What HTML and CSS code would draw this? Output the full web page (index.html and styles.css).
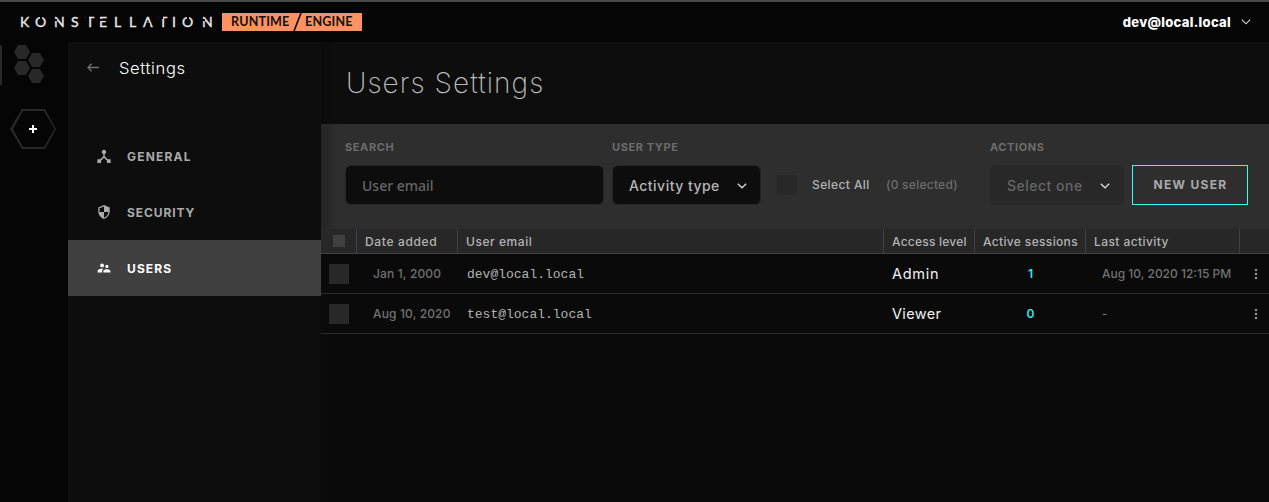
FILE: index.html
```html
<!DOCTYPE html>
<html lang="en">
<head>
<meta charset="utf-8">
<title>Users Settings</title>
<link rel="stylesheet" href="styles.css">
</head>
<body>
<header class="topbar">
  <div class="wordmark"><span>K</span><span class="cut-top">O</span><span class="cut-n">N</span><span>S</span><span class="cut-left">T</span><span class="cut-e">E</span><span>L</span><span>L</span><span class="cut-a">A</span><span class="cut-left flip">T</span><span>I</span><span class="cut-top">O</span><span class="cut-n">N</span></div>
  <div class="product"><span class="runtime">RUNTIME</span><svg class="slash" width="10" height="18"><path d="M9 0 2 18" stroke="#050505" stroke-width="1.6"/></svg><span class="engine">ENGINE</span></div>
  <div class="account"><span class="account-name">dev@local.local</span><svg width="10" height="6" viewBox="0 0 10 6"><path d="M.8.7 5 4.8 9.2.7" fill="none" stroke="#ddd" stroke-width="1.1"/></svg></div>
</header>
<div class="layout">
  <nav class="rail">
    <div class="rail-current"><svg width="30" height="39" viewBox="0 0 30 39" fill="#282828"><path d="M4 0h8l4 7-4 7H4L0 7z"/><path d="M18 8h8l4 7-4 7h-8l-4-7z"/><path d="M4 16h8l4 7-4 7H4l-4-7z"/><path d="M18 24h8l4 7-4 7h-8l-4-7z"/></svg></div>
    <div class="rail-add"><svg width="46" height="40" viewBox="0 0 46 40"><path d="M12 0h23l11 20-11 20H12L0 20zM13 2 3 20l10 18h21l10.500-18L34 2z" fill="#282828" fill-rule="evenodd"/><path d="M23 16v8M19 20h8" stroke="#fff" stroke-width="2"/></svg></div>
  </nav>
  <aside class="sidebar">
    <div class="side-head"><svg width="12" height="9" viewBox="0 0 12 9"><path d="M12 4.500H1.500M4.700.7.9 4.500l3.800 3.800" fill="none" stroke="#6f6f6f" stroke-width="1.400"/></svg><span class="side-title">Settings</span></div>
    <a class="side-item"><svg class="raised" width="14" height="14" viewBox="3 2 18 19"><path d="m17 16-4-4V8.820C14.160 8.400 15 7.300 15 6c0-1.660-1.340-3-3-3S9 4.340 9 6c0 1.300.84 2.400 2 2.820V12l-4 4H3v5h5v-3.050l4-4.200 4 4.200V21h5v-5z" fill="currentColor"/></svg><span class="w-general">GENERAL</span></a>
    <a class="side-item"><svg class="raised" width="14" height="14" viewBox="2 1 20 22"><path d="M12 1 3 5v6c0 5.550 3.840 10.740 9 12 5.160-1.260 9-6.450 9-12V5zm0 10.990h7c-.53 4.120-3.280 7.790-7 8.940V12H5V6.300l7-3.110z" fill="currentColor"/></svg><span class="w-security">SECURITY</span></a>
    <a class="side-item selected"><svg class="raised" width="14" height="10" viewBox="1 5 22 14"><path d="M16.500 12a2.500 2.500 0 1 0 0-5 2.500 2.500 0 0 0 0 5M9 11a3 3 0 1 0 0-6 3 3 0 0 0 0 6m7.500 3c-1.830 0-5.500.92-5.500 2.750V19h11v-2.250C22 14.920 18.330 14 16.500 14M9 13c-2.330 0-7 1.170-7 3.500V19h7v-2.250c0-.85.33-2.340 2.370-3.470C10.500 13.100 9.660 13 9 13" fill="currentColor"/></svg><span class="w-users">USERS</span></a>
  </aside>
  <main class="content">
    <h1 class="page-title"><span>Users Settings</span></h1>
    <section class="filters">
      <div class="field search"><label>SEARCH</label><div class="box"><span class="placeholder">User email</span></div></div>
      <div class="field type"><label>USER TYPE</label><div class="box"><span class="w-activity">Activity type</span><svg width="10" height="6" viewBox="0 0 10 6"><path d="M.8.7 5 4.800 9.200.7" fill="none" stroke="#ddd" stroke-width="1.200"/></svg></div></div>
      <div class="select-all"><i class="check"></i><span class="all">Select All</span><span class="count">(0 selected)</span></div>
      <div class="field actions"><label>ACTIONS</label><div class="box disabled"><span class="w-select">Select one</span><svg width="10" height="6" viewBox="0 0 10 6"><path d="M.8.7 5 4.800 9.200.7" fill="none" stroke="#ddd" stroke-width="1.200"/></svg></div></div>
      <button class="new-user"><span>NEW USER</span></button>
    </section>
    <section class="table">
      <div class="row head"><div class="cell"><i class="check small"></i></div><div class="cell"><span class="h-date">Date added</span></div><div class="cell"><span class="h-email">User email</span></div><div class="cell"><span class="h-access">Access level</span></div><div class="cell"><span class="h-sessions">Active sessions</span></div><div class="cell"><span class="h-last">Last activity</span></div><div class="cell"></div></div>
      <div class="row"><div class="cell"><i class="check"></i></div><div class="cell date"><span class="d-one">Jan 1, 2000</span></div><div class="cell email">dev@local.local</div><div class="cell level"><span class="l-admin">Admin</span></div><div class="cell sessions">1</div><div class="cell date"><span class="d-last">Aug 10, 2020 12:15 PM</span></div><div class="cell more"><svg width="4" height="12" fill="#8a8a8a"><circle cx="2" cy="2" r="1.300"/><circle cx="2" cy="6" r="1.300"/><circle cx="2" cy="10" r="1.300"/></svg></div></div>
      <div class="row"><div class="cell"><i class="check"></i></div><div class="cell date"><span class="d-two">Aug 10, 2020</span></div><div class="cell email">test@local.local</div><div class="cell level"><span class="l-viewer">Viewer</span></div><div class="cell sessions">0</div><div class="cell date"><span>-</span></div><div class="cell more"><svg width="4" height="12" fill="#8a8a8a"><circle cx="2" cy="2" r="1.300"/><circle cx="2" cy="6" r="1.300"/><circle cx="2" cy="10" r="1.300"/></svg></div></div>
    </section>
  </main>
</div>
</body>
</html>
```
FILE: styles.css
```css
* { box-sizing: border-box; }
body { margin: 0; height: 502px; overflow: hidden; background: #050505; color: #b3b3b3; font-family: Inter, "Liberation Sans", sans-serif; display: flex; flex-direction: column; }
svg { display: block; flex: none; }
span { white-space: nowrap; }
.topbar { height: 42px; flex: none; border-top: 2px solid #484848; background: #050505; display: flex; align-items: center; padding: 0 18px 0 20px; }
.wordmark { display: grid; grid-template-columns: 15px 19px 17px 15px 13px 15px 15px 14px 16px 13px 10px 20px 12px; width: 202px; flex: none; font: 14px/16px Lato, sans-serif; color: #e8e8e8; -webkit-text-stroke: .35px #e8e8e8; }
.wordmark span { position: relative; }
.cut-top::after, .cut-n::after, .cut-left::after, .cut-e::after, .cut-a::after { content: ""; position: absolute; background: #050505; }
.cut-top::after { left: 5px; top: 2px; width: 1.5px; height: 3px; }
.cut-n::after { left: 0; top: 5px; width: 3px; height: 2px; }
.cut-left::after { left: 5.5px; top: 2px; width: 4px; height: 3px; }
.cut-left:not(.flip)::after { left: 0; width: 2.5px; }
.cut-left.flip::after { left: 0; width: 3.5px; }
.cut-e::after { left: 0; top: 5px; width: 2.5px; height: 2px; }
.cut-a::after { left: 3px; top: 9px; width: 4px; height: 2px; }
.product { display: flex; align-items: center; width: 140px; height: 18px; background: #ff9260; color: #111; font: 700 12.5px/18px Lato, sans-serif; padding-left: 9px; }
.runtime { width: 61px; letter-spacing: .2px; }
.engine { margin-left: 3px; letter-spacing: .2px; }
.account { margin-left: auto; display: flex; align-items: center; gap: 10px; color: #fff; }
.account-name { font-size: 13px; font-weight: 800; letter-spacing: .3px; }
.layout { flex: 1; display: flex; min-height: 0; }
.rail { width: 68px; flex: none; padding-top: 3px; display: flex; flex-direction: column; gap: 24px; }
.rail-current { height: 40px; border-left: 2px solid #282828; padding-left: 12px; }
.rail-add { padding-left: 9.5px; }
.sidebar { width: 253px; flex: none; background: #0d0d0d; }
.side-head { height: 86px; display: flex; align-items: flex-start; padding: 21px 0 0 19px; gap: 20px; }
.side-title { font-size: 16.5px; line-height: 20px; margin-top: -5px; color: #fff; font-weight: 300; letter-spacing: .65px; }
.side-item { height: 56px; display: flex; align-items: center; gap: 16px; padding: 1px 0 0 29px; color: #aaa; font-size: 12px; font-weight: 700; letter-spacing: .6px; }
.raised { margin-bottom: 2px; }
.w-general { letter-spacing: 1.2px; }
.w-security { letter-spacing: .9px; }
.w-users { letter-spacing: 1.1px; }
.side-item.selected { background: #404040; color: #fff; }
.content { flex: 1; min-width: 0; background: #0a0a0a; }
.page-title { margin: 0; height: 82px; padding: 0 0 0 25px; background: linear-gradient(90deg, #0a0a0a, #0d0d0d 14px); display: flex; align-items: center; font-size: 28px; font-weight: 200; color: #bbb; letter-spacing: 1.05px; }
.filters { height: 105px; background: linear-gradient(90deg, #242424, #2e2e2e 16px); display: flex; padding: 16px 21px 0 24px; }
.field { flex: none; }
.field label { display: block; height: 25px; font-size: 11px; line-height: 14px; font-weight: 700; letter-spacing: .6px; color: #6c6c6c; }
.search { width: 259px; margin-right: 8px; }
.type { width: 149px; }
.actions { width: 134px; margin-left: auto; margin-right: 8px; }
.box { height: 40px; border: 1px solid #252525; border-radius: 6px; background: #0d0d0d; padding: 1px 13px 0 16px; display: flex; align-items: center; justify-content: space-between; font-size: 14px; font-weight: 500; color: #b5b5b5; }
.placeholder { font-family: "Noto Sans", sans-serif; color: #666; }
.w-activity { letter-spacing: .48px; }
.w-select { letter-spacing: .5px; }
.box.disabled { background: #282828; border-color: #282828; color: #666; }
.select-all { margin-left: 16px; height: 40px; margin-top: 25px; display: flex; align-items: center; font-size: 12px; font-weight: 500; }
.check { display: block; width: 20px; height: 20px; background: #282828; }
.all { width: 74px; margin-left: 15px; padding-bottom: 1px; letter-spacing: .4px; }
.count { color: #6c6c6c; padding-bottom: 1px; letter-spacing: .25px; }
.new-user { width: 116px; height: 40px; margin: 25px 0 0; padding: 0 0 2px 1px; border: 1px solid #33ffff; background: transparent; color: #aaa; font: 700 12px Inter, sans-serif; letter-spacing: 1.3px; }
.row { display: grid; grid-template-columns: 36px 101px 426px 91px 111px 154px 29px; height: 40px; border-bottom: 1px solid #2b2b2b; background: #0a0a0a; }
.row.head { height: 25px; background: #272727; border-color: #404040; }
.cell { display: flex; align-items: center; padding-left: 9px; font-size: 12px; font-weight: 500; min-width: 0; }
.head .cell { border-right: 1px solid #404040; padding-left: 8px; }
.head .cell:last-child { border-right: 0; }
.row .cell:first-child { padding-left: 8px; }
.row.head .cell:first-child { padding-left: 12px; }
.h-date { letter-spacing: .65px; }
.h-email { letter-spacing: .55px; }
.h-access { letter-spacing: .22px; }
.h-sessions { letter-spacing: .35px; }
.h-last { letter-spacing: .42px; }
.d-one, .d-two { letter-spacing: .15px; }
.check.small { width: 12px; height: 12px; background: #404040; }
.cell.date { padding-left: 16px; color: #727272; }
.cell.email { font: 13px "Liberation Mono", monospace; padding: 2px 0 0 9px; }
.cell.level { padding-left: 8px; font-size: 14.5px; color: #f2f2f2; font-weight: 400; }
.l-admin { letter-spacing: .7px; }
.l-viewer { letter-spacing: .35px; }
.cell.sessions { padding: 0; justify-content: center; color: #33e6e6; font-weight: 600; }
.cell.more { padding-left: 14px; }
```
